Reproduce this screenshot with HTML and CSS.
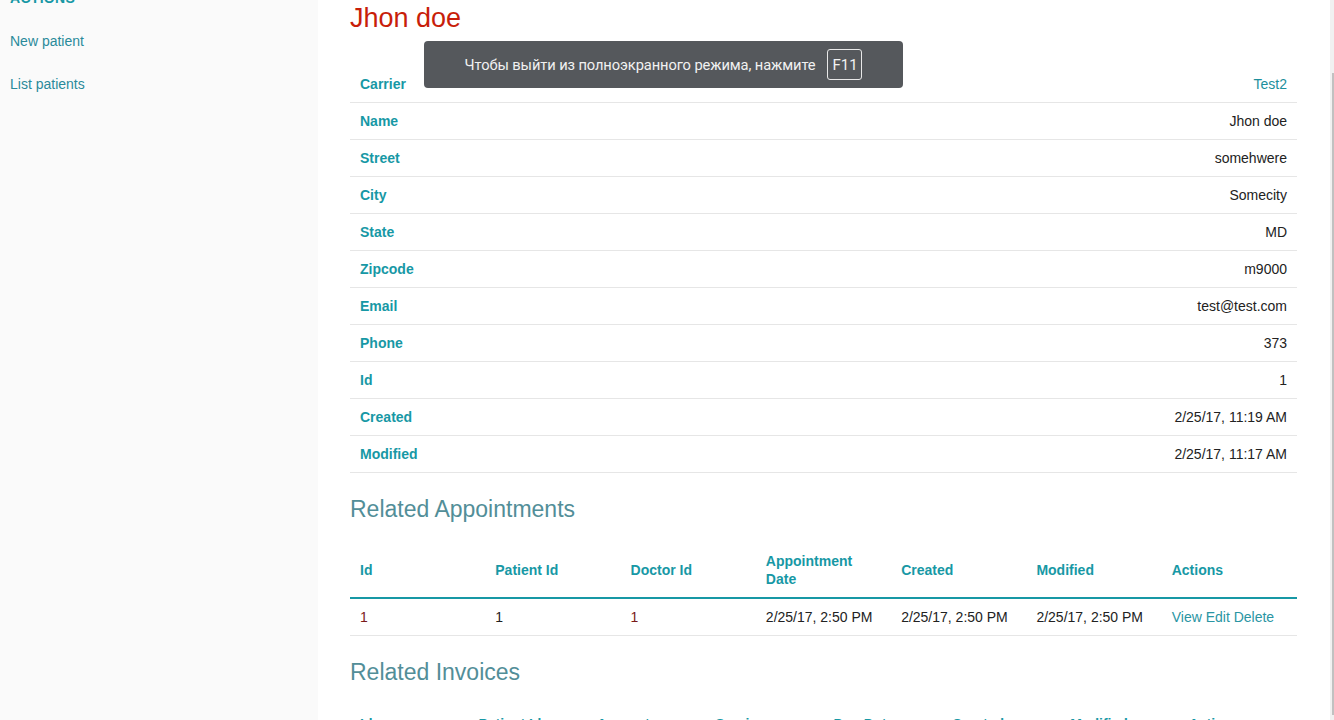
FILE: index.html
```
<!DOCTYPE html>
<html lang="en">
<head>
<meta charset="utf-8">
<title>Patient</title>
<link rel="stylesheet" href="styles.css">
</head>
<body>
<nav class="sidebar">
  <ul class="side-nav">
    <li class="heading">Actions</li>
    <li><a href="#">New patient</a></li>
    <li><a href="#">List patients</a></li>
  </ul>
</nav>
<main class="content">
  <h3 class="title">Jhon doe</h3>
  <table class="vertical-table">
    <tr><th>Carrier</th><td><a href="#">Test2</a></td></tr>
    <tr><th>Name</th><td>Jhon doe</td></tr>
    <tr><th>Street</th><td>somehwere</td></tr>
    <tr><th>City</th><td>Somecity</td></tr>
    <tr><th>State</th><td>MD</td></tr>
    <tr><th>Zipcode</th><td>m9000</td></tr>
    <tr><th>Email</th><td>test@test.com</td></tr>
    <tr><th>Phone</th><td>373</td></tr>
    <tr><th>Id</th><td>1</td></tr>
    <tr><th>Created</th><td>2/25/17, 11:19 AM</td></tr>
    <tr><th>Modified</th><td>2/25/17, 11:17 AM</td></tr>
  </table>

  <h4 class="related-title">Related Appointments</h4>
  <table class="related-table">
    <thead>
      <tr>
        <th>Id</th><th>Patient Id</th><th>Doctor Id</th><th>Appointment Date</th><th>Created</th><th>Modified</th><th>Actions</th>
      </tr>
    </thead>
    <tbody>
      <tr>
        <td class="num-red">1</td><td>1</td><td class="num-red">1</td><td>2/25/17, 2:50 PM</td><td>2/25/17, 2:50 PM</td><td>2/25/17, 2:50 PM</td>
        <td class="actions"><a href="#">View</a> <a href="#">Edit</a> <a href="#">Delete</a></td>
      </tr>
    </tbody>
  </table>

  <h4 class="related-title">Related Invoices</h4>
  <table class="related-table">
    <thead>
      <tr>
        <th>Id</th><th>Patient Id</th><th>Amount</th><th>Service</th><th>Due Date</th><th>Created</th><th>Modified</th><th>Actions</th>
      </tr>
    </thead>
  </table>
</main>

<div class="fs-bubble">
  <span class="fs-text">Чтобы выйти из полноэкранного режима, нажмите</span>
  <span class="fs-key">F11</span>
</div>

<div class="scrollbar"><div class="scrollbar-thumb"></div></div>
</body>
</html>
```

FILE: styles.css
```
html, body {
  margin: 0;
  padding: 0;
  height: 720px;
  overflow: hidden;
}

body {
  display: flex;
  align-items: stretch;
  font-family: "Liberation Sans", Arial, Helvetica, sans-serif;
  font-size: 14px;
  color: #333;
  background: #fff;
}

a {
  color: #1d8f9c;
  text-decoration: none;
}

/* Sidebar */
.sidebar {
  width: 318px;
  flex: 0 0 318px;
  background: #fafafa;
  box-sizing: border-box;
  padding: 0 10px;
}

.side-nav {
  list-style: none;
  margin: -24px 0 0 0;
  padding: 0;
}

.side-nav li {
  line-height: 20px;
  padding: 11.5px 0;
  font-size: 14px;
}

.side-nav li a {
  color: #2a8a9a;
}

.side-nav .heading {
  text-transform: uppercase;
  font-weight: bold;
  color: #1798a5;
  letter-spacing: 0.3px;
}

/* Content */
.content {
  flex: 1 1 auto;
  box-sizing: border-box;
  padding: 1px 37px 0 32px;
}

.title {
  margin: 0 0 31px 0;
  font-size: 27px;
  line-height: 34px;
  font-weight: normal;
  color: #c81e0a;
}

.vertical-table {
  width: 100%;
  border-collapse: collapse;
}

.vertical-table tr {
  border-bottom: 1px solid #e6e6e6;
}

.vertical-table th,
.vertical-table td {
  padding: 8px 10px;
  line-height: 20px;
  font-size: 14px;
}

.vertical-table th {
  text-align: left;
  font-weight: bold;
  color: #1798a5;
}

.vertical-table td {
  text-align: right;
  color: #222;
}

.related-title {
  margin: 22px 0 18px 0;
  font-size: 23px;
  line-height: 29px;
  font-weight: normal;
  color: #528e98;
}

.related-table {
  width: 100%;
  border-collapse: collapse;
  table-layout: fixed;
}

.related-table thead tr {
  border-bottom: 2px solid #1798a5;
}

.related-table th {
  text-align: left;
  font-weight: bold;
  font-size: 14px;
  line-height: 18px;
  color: #1798a5;
  padding: 10px 10px 9px 10px;
  vertical-align: middle;
}

.related-table tbody tr {
  border-bottom: 1px solid #e6e6e6;
}

.related-table td {
  padding: 8px 10px;
  line-height: 20px;
  font-size: 14px;
  color: #222;
  white-space: nowrap;
}

.related-table td.num-red {
  color: #7a1a1a;
}

.related-table .actions a {
  color: #2a95a3;
}

/* Fullscreen bubble overlay */
.fs-bubble {
  position: fixed;
  left: 424px;
  top: 41px;
  width: 479px;
  height: 47px;
  box-sizing: border-box;
  background: #55585c;
  border-radius: 4px;
  display: flex;
  align-items: center;
  justify-content: center;
  gap: 12px;
  font-family: Roboto, "Noto Sans", sans-serif;
  color: #f1f1f1;
}

.fs-text {
  font-size: 14.7px;
  letter-spacing: -0.1px;
}

.fs-key {
  display: flex;
  align-items: center;
  justify-content: center;
  width: 35px;
  height: 31px;
  box-sizing: border-box;
  border: 1px solid #e8e8e8;
  border-radius: 3px;
  font-size: 15px;
}

/* Fake scrollbar */
.scrollbar {
  position: fixed;
  right: 0;
  top: 0;
  width: 4px;
  height: 720px;
  background: #f1f1f1;
}

.scrollbar-thumb {
  margin-top: 73px;
  margin-left: 2px;
  width: 2px;
  height: 642px;
  background: #c1c1c1;
}
```
